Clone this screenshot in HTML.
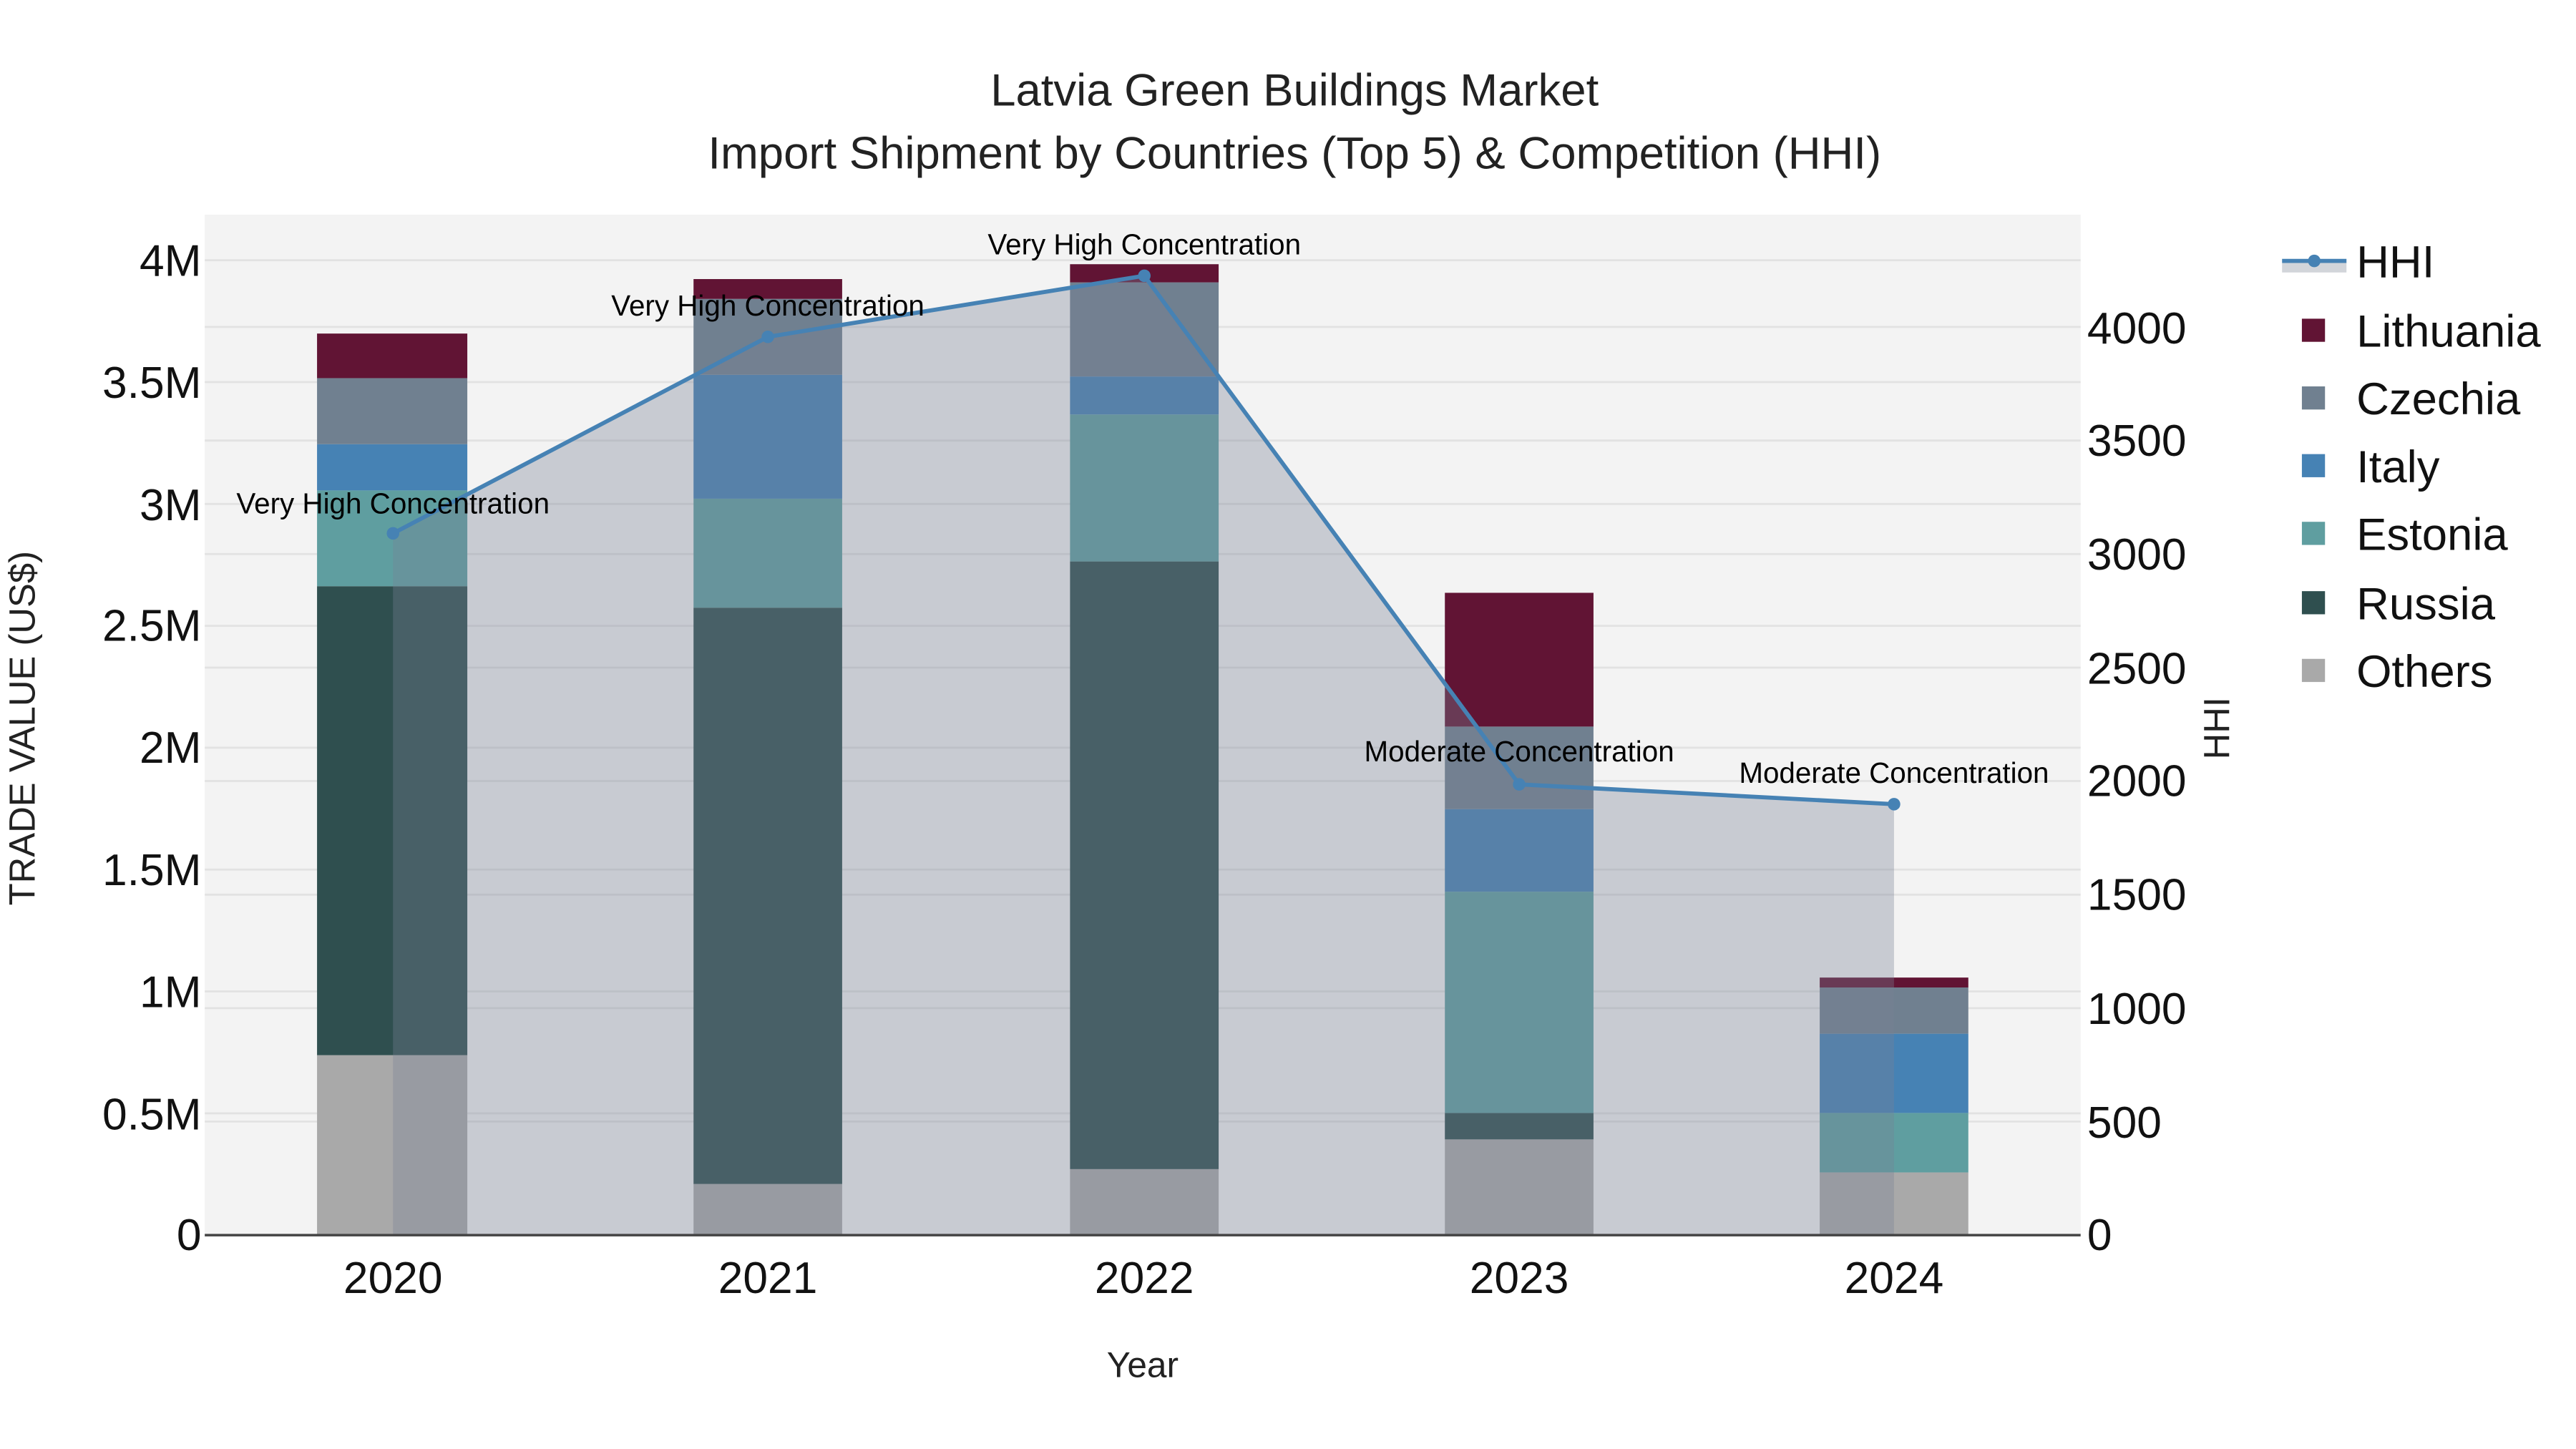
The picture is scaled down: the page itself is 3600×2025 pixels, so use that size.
<!DOCTYPE html>
<html><head><meta charset="utf-8"><style>html,body{margin:0;padding:0;background:#fff}svg{display:block}</style></head>
<body>
<svg width="3600" height="2025" viewBox="0 0 1560 877.5" xmlns="http://www.w3.org/2000/svg" font-family="Liberation Sans, sans-serif">
<rect x="0" y="0" width="1560" height="877.5" fill="#fff"/>
<rect x="124" y="130" width="1136" height="618" fill="#f3f3f3"/>
<g stroke="#e2e2e2" stroke-width="1.2">
<line x1="124" x2="1260" y1="674.2" y2="674.2"/><line x1="124" x2="1260" y1="600.4" y2="600.4"/>
<line x1="124" x2="1260" y1="526.6" y2="526.6"/><line x1="124" x2="1260" y1="452.8" y2="452.8"/>
<line x1="124" x2="1260" y1="379" y2="379"/><line x1="124" x2="1260" y1="305.2" y2="305.2"/>
<line x1="124" x2="1260" y1="231.4" y2="231.4"/><line x1="124" x2="1260" y1="157.6" y2="157.6"/>
<line x1="124" x2="1260" y1="679.2" y2="679.2"/><line x1="124" x2="1260" y1="610.5" y2="610.5"/>
<line x1="124" x2="1260" y1="541.8" y2="541.8"/><line x1="124" x2="1260" y1="473" y2="473"/>
<line x1="124" x2="1260" y1="404.3" y2="404.3"/><line x1="124" x2="1260" y1="335.5" y2="335.5"/>
<line x1="124" x2="1260" y1="266.8" y2="266.8"/><line x1="124" x2="1260" y1="198" y2="198"/>
</g>
<g>
<rect x="192" y="639" width="91" height="109" fill="#a9a9a9"/><rect x="192" y="355" width="91" height="284" fill="#2f4f4f"/><rect x="192" y="297" width="91" height="58" fill="#5f9ea0"/><rect x="192" y="269" width="91" height="28" fill="#4682b4"/><rect x="192" y="229" width="91" height="40" fill="#708090"/><rect x="192" y="202" width="91" height="27" fill="#611434"/>
<rect x="420" y="717" width="90" height="31" fill="#a9a9a9"/><rect x="420" y="368" width="90" height="349" fill="#2f4f4f"/><rect x="420" y="302" width="90" height="66" fill="#5f9ea0"/><rect x="420" y="227" width="90" height="75" fill="#4682b4"/><rect x="420" y="181" width="90" height="46" fill="#708090"/><rect x="420" y="169" width="90" height="12" fill="#611434"/>
<rect x="648" y="708" width="90" height="40" fill="#a9a9a9"/><rect x="648" y="340" width="90" height="368" fill="#2f4f4f"/><rect x="648" y="251" width="90" height="89" fill="#5f9ea0"/><rect x="648" y="228" width="90" height="23" fill="#4682b4"/><rect x="648" y="171" width="90" height="57" fill="#708090"/><rect x="648" y="160" width="90" height="11" fill="#611434"/>
<rect x="875" y="690" width="90" height="58" fill="#a9a9a9"/><rect x="875" y="674" width="90" height="16" fill="#2f4f4f"/><rect x="875" y="540" width="90" height="134" fill="#5f9ea0"/><rect x="875" y="490" width="90" height="50" fill="#4682b4"/><rect x="875" y="440" width="90" height="50" fill="#708090"/><rect x="875" y="359" width="90" height="81" fill="#611434"/>
<rect x="1102" y="710" width="90" height="38" fill="#a9a9a9"/><rect x="1102" y="674" width="90" height="36" fill="#5f9ea0"/><rect x="1102" y="626" width="90" height="48" fill="#4682b4"/><rect x="1102" y="598" width="90" height="28" fill="#708090"/><rect x="1102" y="592" width="90" height="6" fill="#611434"/>
</g>
<path d="M238,748 L238,323 L465,204 L693,167 L920,475 L1147,487 L1147,748 Z" fill="rgb(120,130,150)" fill-opacity="0.35"/>
<polyline points="238,323 465,204 693,167 920,475 1147,487" fill="none" stroke="#4682b4" stroke-width="2.5"/>
<g fill="#4682b4"><circle cx="238" cy="323" r="3.8"/><circle cx="465" cy="204" r="3.8"/><circle cx="693" cy="167" r="3.8"/><circle cx="920" cy="475" r="3.8"/><circle cx="1147" cy="487" r="3.8"/></g>
<line x1="124" x2="1260" y1="748" y2="748" stroke="#444" stroke-width="1.5"/>
<g font-size="17.5" text-anchor="middle" fill="#000">
<text x="238" y="311">Very High Concentration</text>
<text x="465" y="191">Very High Concentration</text>
<text x="693" y="154">Very High Concentration</text>
<text x="920" y="461">Moderate Concentration</text>
<text x="1147" y="474">Moderate Concentration</text>
</g>
<g font-size="27" text-anchor="end" fill="#111">
<text x="122" y="757">0</text><text x="122" y="684">0.5M</text><text x="122" y="610">1M</text><text x="122" y="536">1.5M</text><text x="122" y="462">2M</text><text x="122" y="388">2.5M</text><text x="122" y="315">3M</text><text x="122" y="241">3.5M</text><text x="122" y="167">4M</text>
</g>
<g font-size="27" text-anchor="start" fill="#111">
<text x="1264" y="757">0</text><text x="1264" y="689">500</text><text x="1264" y="620">1000</text><text x="1264" y="551">1500</text><text x="1264" y="482">2000</text><text x="1264" y="414">2500</text><text x="1264" y="345">3000</text><text x="1264" y="276">3500</text><text x="1264" y="208">4000</text>
</g>
<g font-size="27" text-anchor="middle" fill="#111">
<text x="238" y="783">2020</text><text x="465" y="783">2021</text><text x="693" y="783">2022</text><text x="920" y="783">2023</text><text x="1147" y="783">2024</text>
</g>
<text x="692" y="834" font-size="21.5" text-anchor="middle" fill="#222">Year</text>
<text transform="translate(21,441) rotate(-90)" font-size="22" text-anchor="middle" fill="#222">TRADE VALUE (US$)</text>
<text transform="translate(1350,441) rotate(-90)" font-size="22" text-anchor="middle" fill="#222">HHI</text>
<g font-size="27.5" text-anchor="middle" fill="#222">
<text x="784" y="64">Latvia Green Buildings Market</text>
<text x="784" y="102">Import Shipment by Countries (Top 5) &amp; Competition (HHI)</text>
</g>
<rect x="1382" y="159" width="39" height="6" fill="#d2d5da"/>
<line x1="1382" x2="1421" y1="158" y2="158" stroke="#4682b4" stroke-width="2.5"/>
<circle cx="1401.5" cy="158" r="3.8" fill="#4682b4"/>
<g font-size="27.5" fill="#111">
<text x="1427" y="168">HHI</text>
<text x="1427" y="210">Lithuania</text>
<text x="1427" y="251">Czechia</text>
<text x="1427" y="292">Italy</text>
<text x="1427" y="333">Estonia</text>
<text x="1427" y="375">Russia</text>
<text x="1427" y="416">Others</text>
</g>
<rect x="1394" y="193" width="14" height="14" fill="#611434"/>
<rect x="1394" y="234" width="14" height="14" fill="#708090"/>
<rect x="1394" y="275" width="14" height="14" fill="#4682b4"/>
<rect x="1394" y="316" width="14" height="14" fill="#5f9ea0"/>
<rect x="1394" y="358" width="14" height="14" fill="#2f4f4f"/>
<rect x="1394" y="399" width="14" height="14" fill="#a9a9a9"/>
</svg>
</body></html>
